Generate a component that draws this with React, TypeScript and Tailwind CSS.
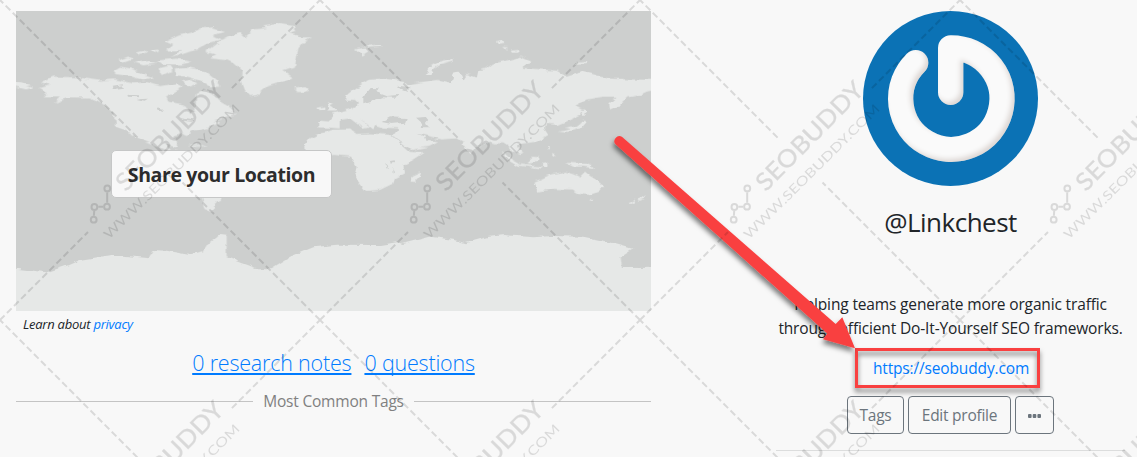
import React from 'react';

const SANS = "font-['Open_Sans','Noto_Sans',sans-serif]";

function WorldMap() {
  return (
    <svg className="block h-[300px] w-[635px]" viewBox="48 33 1905 900" preserveAspectRatio="none">
      <defs>
        <filter id="coast" x="-2%" y="-2%" width="104%" height="104%">
          <feTurbulence type="fractalNoise" baseFrequency="0.03 0.07" numOctaves="2" seed="4" result="n" />
          <feDisplacementMap in="SourceGraphic" in2="n" scale="16" xChannelSelector="R" yChannelSelector="G" result="d" />
          <feGaussianBlur in="d" stdDeviation="1.6" />
        </filter>
      </defs>
      <rect x="48" y="33" width="1905" height="900" fill="#cdcfce" />
      <g fill="#e6e8e7" filter="url(#coast)">
        {/* North America */}
        <path d="M118,265 L150,255 L122,246 L160,230 L230,232 L300,242 L340,238 L400,250 L440,246 L480,258 L530,250 L548,262 L520,278 L498,290 L505,305 L545,312 L562,322 L570,342 L585,335 L588,305 L590,285 L615,270 L640,285 L660,305 L690,322 L710,342 L680,350 L640,362 L660,370 L620,385 L580,395 L560,408 L548,402 L520,408 L532,430 L528,442 L495,432 L512,450 L590,462 L560,470 L470,440 L435,425 L380,395 L348,378 L345,345 L310,310 L270,293 L200,292 L160,308 L180,292 L130,292 L140,280Z" />
        <path d="M20,240 L60,246 L98,262 L80,268 L48,260 L20,255Z" />
        {/* Arctic islands */}
        <path d="M495,125 L540,105 L575,98 L600,85 L640,82 L675,95 L640,106 L665,118 L620,130 L590,148 L548,162 L515,170 L545,150 L500,152 L520,135Z" />
        <path d="M340,212 L360,200 L395,206 L430,222 L460,232 L430,240 L390,228 L350,222Z" />
        <path d="M352,182 L385,170 L400,176 L365,188Z M400,186 L440,180 L470,190 L430,196Z M410,158 l24,-6 l6,6 l-26,5Z M448,150 l25,-4 l8,6 l-24,5Z M470,182 l60,-6 l45,10 l-30,8 l-60,-2Z M478,205 l30,-8 l10,14 l-30,14Z M525,208 l40,-6 l50,12 l35,28 l12,18 l-30,2 l-30,-20 l-40,-12 l-38,-4Z M545,245 l30,-8 l20,14 l-30,10Z" />
        {/* Greenland and Iceland */}
        <path d="M618,155 L650,130 L690,108 L720,98 L735,112 L760,88 L800,84 L790,76 L830,70 L880,78 L890,92 L870,100 L905,112 L935,112 L910,128 L895,145 L890,175 L885,200 L850,212 L878,232 L850,245 L800,260 L770,285 L750,288 L735,270 L725,245 L728,215 L700,190 L680,180 L630,175 L650,165Z" />
        <path d="M882,266 l30,-5 l15,6 l-20,9 l-14,0Z" />
        {/* South America */}
        <path d="M560,470 L640,480 L740,520 L700,575 L650,605 L632,640 L612,625 L606,590 L590,540Z" />
        <path d="M562,434 l40,-4 l22,8 l-30,3Z" opacity="0.7" />
        {/* British Isles */}
        <path d="M952,324 l24,-5 l0,12 l-18,2Z M980,306 l20,12 l10,16 l-28,0 l6,-12Z M960,362 l26,2 l16,-18 l20,-4 l0,43 l-60,-4Z" />
        <g transform="translate(960 0)">
          {/* Eurasia */}
          <path d="M-5,382 L-5,365 L30,365 L45,355 L35,342 L60,335 L95,325 L118,312 L105,300 L75,298 L80,285 L110,262 L145,240 L190,235 L250,243 L262,255 L280,250 L350,240 L395,252 L400,222 L418,215 L430,240 L440,225 L470,235 L475,212 L500,205 L520,190 L570,180 L600,170 L635,185 L605,203 L660,208 L710,212 L740,230 L790,215 L860,235 L930,238 L1020,240 L1020,268 L980,275 L960,285 L925,292 L900,315 L870,328 L868,310 L890,290 L850,290 L800,298 L765,318 L785,328 L780,345 L745,362 L715,375 L680,372 L672,385 L685,405 L650,425 L600,432 L590,440 L612,455 L600,462 L580,455 L565,440 L550,430 L530,430 L510,425 L495,435 L470,440 L455,462 L440,450 L425,425 L410,415 L365,418 L310,405 L290,400 L320,418 L355,425 L325,440 L275,450 L215,405 L228,400 L235,385 L190,383 L165,375 L160,388 L140,372 L120,360 L150,382 L130,386 L90,355 L60,360 L30,382Z" />
          {/* Africa */}
          <path d="M-48,440 L-30,415 L0,400 L40,390 L90,388 L110,402 L150,400 L212,405 L270,456 L315,457 L280,480 L250,495 L255,520 L225,535 L220,550 L180,570 L138,573 L115,545 L105,520 L110,500 L90,470 L40,465 L0,468 L-40,455Z" />
          <path d="M272,545 L275,530 L303,517 L300,530 L285,546Z" />
          {/* Arctic Russia and Svalbard */}
          <path d="M320,224 L330,200 L355,185 L400,176 L402,181 L362,192 L340,206 L334,224Z M105,148 l28,-6 l12,12 l-20,12Z M140,138 l38,-4 l4,6 l-36,3Z M530,124 l18,-5 l8,12 l-18,3Z M545,140 l22,2 l-5,6Z M572,152 l22,-2 l2,8 l-20,0Z M770,188 l30,-2 l0,6 l-26,2Z" />
          {/* Japan, Indonesia, Philippines */}
          <path d="M780,330 l15,-2 l5,8 l-8,10Z M710,392 L735,388 L770,378 L790,362 L800,366 L785,384 L745,396Z M545,452 L570,475 L600,492 L590,496 L560,478Z M618,488 l20,-18 l22,2 l-4,14 l-30,4Z M590,492 l50,6 l30,2 l-4,5 l-70,-8Z M668,492 l16,-3 l2,14 l-12,0Z M735,488 L770,490 L800,492 L830,506 L790,500 L760,500Z M680,440 l8,2 l-4,8Z M698,462 l12,4 l-8,4Z" />
          {/* Australia and New Zealand */}
          <path d="M643,545 L660,538 L690,525 L710,520 L735,515 L760,522 L780,530 L795,515 L810,528 L830,540 L850,558 L835,575 L810,585 L775,582 L755,568 L700,567 L655,575Z M808,598 l16,-1 l-4,7Z M925,610 L945,600 L950,604 L930,614Z M955,598 L978,586 L975,596 L960,602Z" />
        </g>
        {/* Antarctica */}
        <path d="M10,800 L48,806 L140,817 L200,797 L240,780 L340,764 L450,775 L460,750 L500,752 L565,764 L610,754 L625,732 L660,705 L680,707 L680,772 L720,787 L770,805 L815,805 L870,770 L940,742 L1010,734 L1140,735 L1190,727 L1205,732 L1290,710 L1360,719 L1395,730 L1460,712 L1510,705 L1600,712 L1660,708 L1750,710 L1810,722 L1900,747 L1862,772 L1866,804 L1990,803 L1990,980 L10,980Z" />
      </g>
      <g fill="#cdcfce" filter="url(#coast)">
        <path d="M1090,292 L1112,264 L1140,265 L1125,275 L1160,288 L1195,285 L1190,293 L1145,292 L1110,304 L1090,310Z" />
        <path d="M1145,366 L1170,352 L1220,354 L1215,368 L1175,372Z" />
        <path d="M1245,350 L1275,348 L1285,360 L1278,368 L1290,382 L1262,382 L1265,368Z" />
        <path d="M1200,258 L1235,262 L1220,272 L1190,262Z" />
        <path d="M338,260 l30,-4 l4,7 l-30,4Z M385,284 l32,2 l0,6 l-30,-2Z M410,298 l34,-2 l-10,6Z M472,322 l14,4 l4,8 l-14,-4Z M540,352 l40,6 l5,8 l-36,-4Z" />
        <path d="M1155,492 l10,8 l-4,4Z M1170,486 l14,-2 l2,8 l-14,2Z M1180,504 l5,10 l-4,4Z" />
      </g>
    </svg>
  );
}

function Avatar() {
  return (
    <svg className="block size-[175px]" viewBox="69 33 525 525">
      <defs>
        <filter id="bevel" filterUnits="userSpaceOnUse" x="69" y="33" width="525" height="525">
          <feGaussianBlur in="SourceAlpha" stdDeviation="8" result="b" />
          <feOffset in="b" dx="-9" dy="-8" result="o" />
          <feComposite in="SourceAlpha" in2="o" operator="out" result="edge" />
          <feFlood floodColor="#b09c92" floodOpacity="0.45" />
          <feComposite in2="edge" operator="in" result="shade" />
          <feMerge result="m">
            <feMergeNode in="SourceGraphic" />
            <feMergeNode in="shade" />
          </feMerge>
          <feGaussianBlur in="m" stdDeviation="1.8" />
        </filter>
      </defs>
      <circle cx="331.5" cy="295.5" r="262.5" fill="#0b72b5" />
      <path
        d="M227,188 A152,152 0 1 0 332,144 L332,277"
        fill="none"
        stroke="#fafafa"
        strokeWidth="76"
        strokeLinecap="round"
        strokeLinejoin="round"
        filter="url(#bevel)"
      />
    </svg>
  );
}

function Arrow() {
  return (
    <svg className="pointer-events-none absolute left-0 top-0 h-[457px] w-[1137px]" viewBox="0 0 1137 457">
      <defs>
        <filter id="drop" x="-10%" y="-10%" width="120%" height="130%">
          <feDropShadow dx="-1" dy="4" stdDeviation="2.5" floodColor="#000" floodOpacity="0.5" />
        </filter>
      </defs>
      <g fill="#f94040" filter="url(#drop)">
        <path d="M622.2,137 L835.7,324 L842.3,317.3 L855,348.3 L823,339.3 L827.3,333.5 L615.8,144.6 A5,5 0 0 1 622.2,137Z" />
      </g>
    </svg>
  );
}

function Watermark() {
  return (
    <svg className="pointer-events-none absolute left-0 top-0 h-[457px] w-[1137px]" viewBox="0 0 1137 457">
      <defs>
        <pattern id="mark" width="320" height="320" patternUnits="userSpaceOnUse">
          <g fill="none" stroke="#000" strokeWidth="2" strokeDasharray="6.6 3.4" strokeDashoffset="2">
            <path d="M0,0 L138,138" />
            <path d="M182.5,182.5 L320,320" />
            <path d="M320,0 L231,89" />
            <path d="M88,232 L0,320" />
          </g>
          <g fill="none" stroke="#000" strokeWidth="2">
            <circle cx="107.3" cy="188.4" r="2.9" />
            <circle cx="107" cy="206.7" r="2.9" />
            <circle cx="94.4" cy="207" r="2.9" />
            <circle cx="93.7" cy="219.7" r="2.9" />
            <path d="M107.2,192.3 V202.8 M103.1,206.8 H98.3 M94.2,210.9 L93.9,215.8" />
          </g>
          <g fill="#000" fontFamily="Lato, sans-serif" textAnchor="middle">
            <text transform="translate(175.6 142) rotate(-45.3)" fontSize="24.5" fontWeight="500" stroke="#000" strokeWidth="0.2" textLength="142" lengthAdjust="spacingAndGlyphs">SEOBUDDY</text>
            <text transform="translate(174.8 174.8) rotate(-44.7)" fontSize="13" textLength="185" lengthAdjust="spacingAndGlyphs">WWW.SEOBUDDY.COM</text>
          </g>
        </pattern>
      </defs>
      <rect width="1137" height="457" fill="url(#mark)" opacity="0.12" />
    </svg>
  );
}

const outlineButton =
  'flex h-[38px] items-center justify-center rounded-[4px] border border-[#6c757d] pt-px text-[15.5px] tracking-[-0.25px] text-[#6c757d]';

export default function App() {
  return (
    <div className={`relative flex h-[457px] w-[1137px] overflow-hidden bg-[#f8f8f8] pl-4 pt-[11px] text-[#212529] ${SANS}`}>
      <section className="flex w-[635px] flex-col">
        <div className="relative h-[300px]">
          <WorldMap />
          <button className="absolute left-[95px] top-[139px] flex h-[48px] w-[221px] items-center justify-center rounded-[5px] border border-[#c6c7c7] bg-[#f8f8f8] pt-px text-[19.5px] font-bold tracking-[-0.4px] whitespace-nowrap text-[#2d2d2d]">
            Share your Location
          </button>
        </div>
        <p className="mt-[3px] pl-[7px] text-[13px] leading-[20px] italic tracking-[-0.25px]">
          Learn about <a className="text-[#007bff]">privacy</a>
        </p>
        <div className="mt-[14px] flex justify-center gap-[13px] text-[21.5px] leading-[30px] font-[340] tracking-[-0.2px] text-[#007bff]">
          <a className="whitespace-nowrap underline decoration-2 underline-offset-[2px] [text-decoration-skip-ink:none]">0 research notes</a>
          <a className="whitespace-nowrap underline decoration-2 underline-offset-[2px] [text-decoration-skip-ink:none]">0 questions</a>
        </div>
        <div className="mt-[11px] flex items-center gap-[10px] text-[15.5px] leading-6 tracking-[-0.2px] whitespace-nowrap text-[#808080]">
          <div className="h-px flex-1 bg-[#c4c4c4]" />
          Most Common Tags
          <div className="h-px flex-1 bg-[#c4c4c4]" />
        </div>
      </section>

      <section className="ml-[125px] flex w-[349px] flex-col items-center">
        <Avatar />
        <h1 className="mt-[19px] text-[26px] leading-[34px] tracking-[-0.5px] whitespace-nowrap">@Linkchest</h1>
        <p className="mt-[53px] text-center text-[15.5px] leading-6 tracking-[-0.15px] whitespace-nowrap">
          Helping teams generate more organic traffic
          <br />
          through efficient Do-It-Yourself SEO frameworks.
        </p>
        <div className="relative mt-[8px] -ml-[6px] flex h-[40px] w-[185px] items-center justify-center pt-[2px] pl-[7px] text-[15.5px] tracking-[-0.15px] text-[#007bff]">
          <div className="absolute inset-0 border-[3px] border-[#f94040] drop-shadow-[0_4px_2.5px_rgba(0,0,0,0.5)]" />
          <a className="relative">https://seobuddy.com</a>
        </div>
        <div className="mt-[8px] flex gap-[4px]">
          <button className={`${outlineButton} w-[57px]`}>Tags</button>
          <button className={`${outlineButton} w-[103px]`}>Edit profile</button>
          <button className={`${outlineButton} w-[39px]`}>
            <svg className="h-[4px] w-[13px]" viewBox="0 0 13 4" fill="#6c757d">
              <rect x="0" y="0" width="3.6" height="4" rx="1" />
              <rect x="4.7" y="0" width="3.6" height="4" rx="1" />
              <rect x="9.4" y="0" width="3.6" height="4" rx="1" />
            </svg>
          </button>
        </div>
        <div className="mt-[16px] h-px w-full shrink-0 bg-[#dcdddd]" />
      </section>

      <Arrow />
      <Watermark />
    </div>
  );
}
